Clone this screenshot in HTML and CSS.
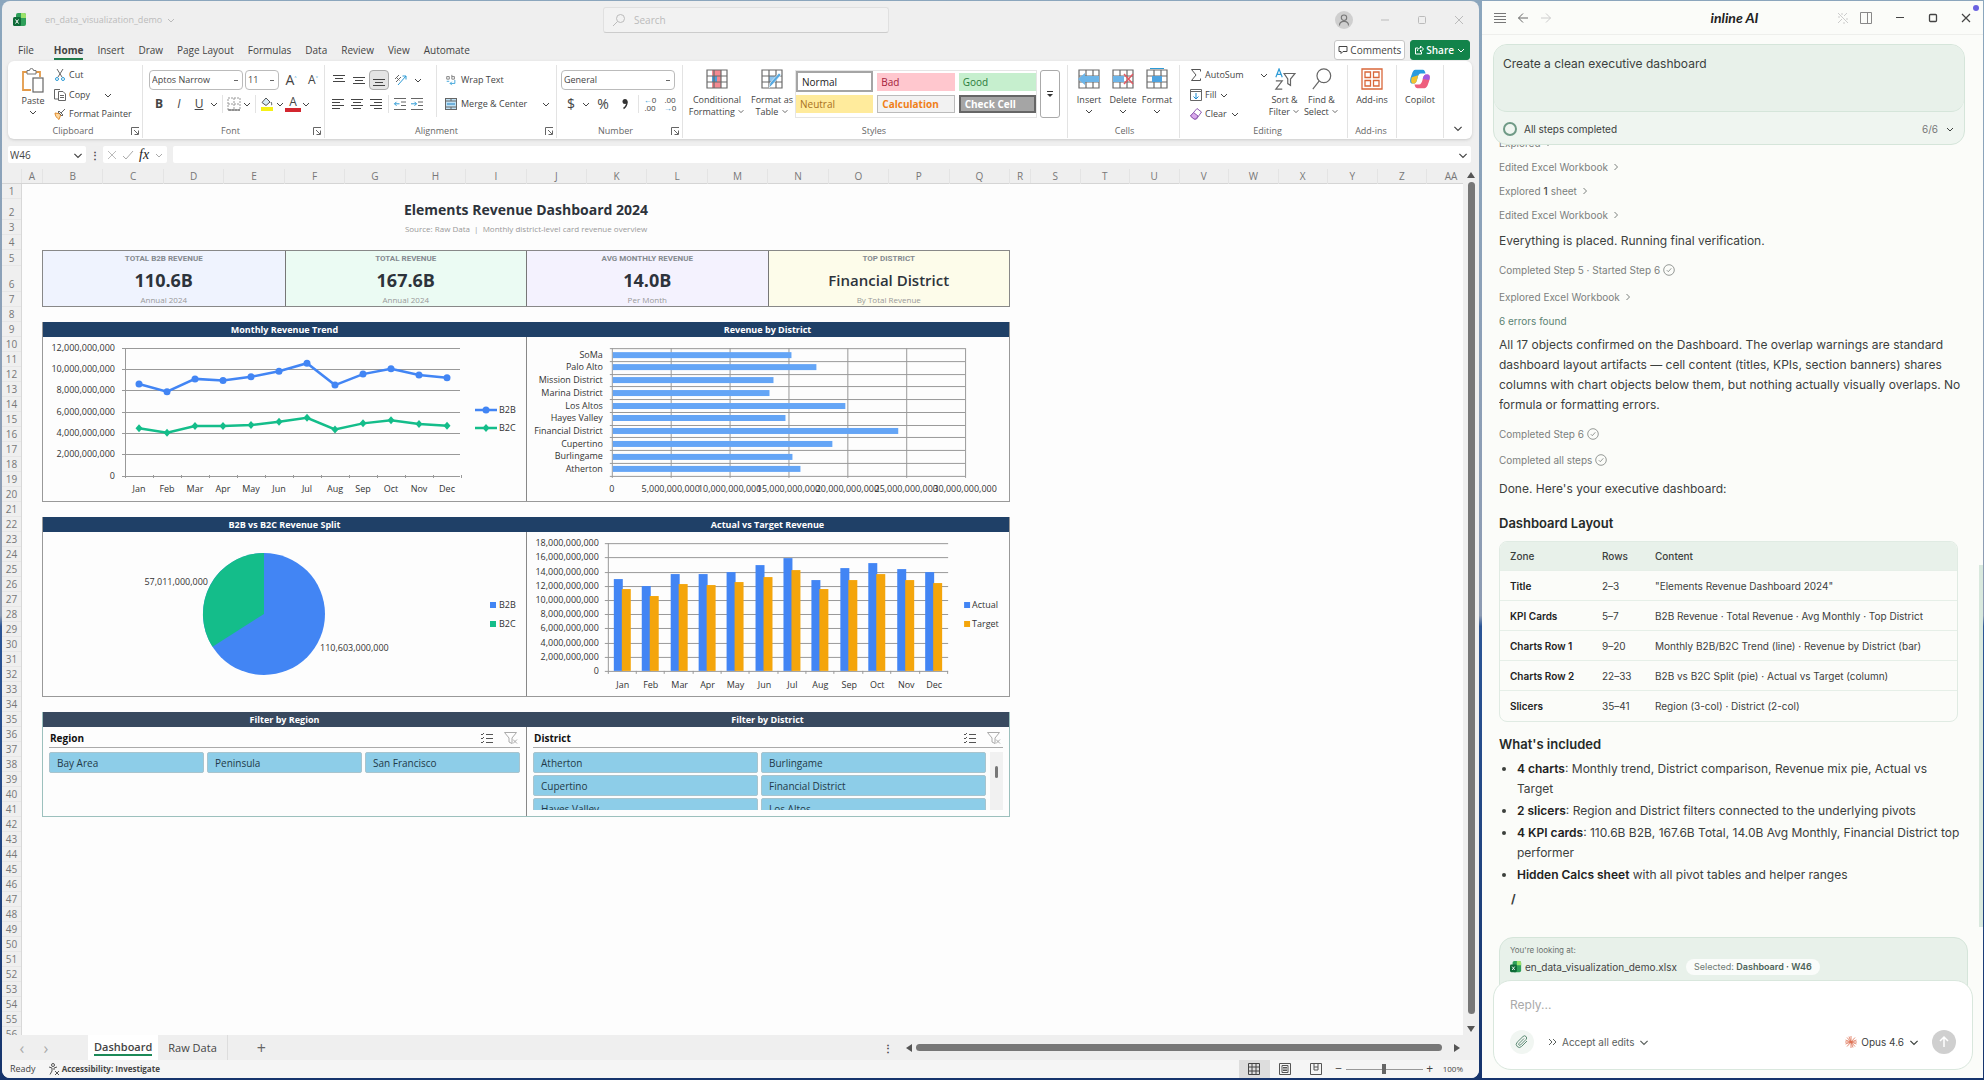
FILE: index.html
```html
<!DOCTYPE html>
<html lang="en">
<head>
<meta charset="utf-8">
<title>en_data_visualization_demo</title>
<link rel="stylesheet" href="styles.css">
</head>
<body>
<svg class="defs" aria-hidden="true">
  <symbol id="chev" viewBox="0 0 10 10"><path d="M2 4l3 3 3-3" fill="none" stroke="currentColor"/></symbol>
  <symbol id="chev-r" viewBox="0 0 10 10"><path d="M3.500 2l3 3-3 3" fill="none" stroke="currentColor"/></symbol>
  <symbol id="launch" viewBox="0 0 10 10"><path d="M1.500 9V1.500H9M4 4l4 4M8.500 4.500v4h-4" fill="none" stroke="currentColor"/></symbol>
  <symbol id="excel" viewBox="0 0 14 14"><rect x="3" y="0" width="10" height="13" rx="2" fill="#2fa05a"/><path d="M8 0h3a2 2 0 0 1 2 2v3H8z" fill="#9be26b"/><rect x="0" y="4" width="8" height="9" rx="1.500" fill="#0f6b38"/><path d="M2.500 6.500l3 4M5.500 6.500l-3 4" stroke="#fff"/></symbol>
  <symbol id="done" viewBox="0 0 12 12"><circle cx="6" cy="6" r="5.300" fill="none" stroke="currentColor" stroke-width=".8"/><path d="M3.800 6.200l1.500 1.500 3-3.400" fill="none" stroke="currentColor" stroke-width=".8"/></symbol>
  <symbol id="lines-c" viewBox="0 0 14 14"><path d="M1 2.500h12M3 5.500h8M1 8.500h12M3 11.500h8" stroke="currentColor"/></symbol>
  <symbol id="lines-l" viewBox="0 0 14 14"><path d="M1 2.500h12M1 5.500h8M1 8.500h12M1 11.500h8" stroke="currentColor"/></symbol>
  <symbol id="lines-r" viewBox="0 0 14 14"><path d="M1 2.500h12M5 5.500h8M1 8.500h12M5 11.500h8" stroke="currentColor"/></symbol>
  <symbol id="v-top" viewBox="0 0 14 14"><path d="M1 2.500h12M3 5.500h8M1 8.500h12" stroke="currentColor"/></symbol>
  <symbol id="v-mid" viewBox="0 0 14 14"><path d="M1 4.500h12M3 7.500h8M1 10.500h12" stroke="currentColor"/></symbol>
  <symbol id="v-bot" viewBox="0 0 14 14"><path d="M1 6.500h12M3 9.500h8M1 12.500h12" stroke="currentColor"/></symbol>
  <symbol id="indent-out" viewBox="0 0 14 14"><path d="M1 1.500h12M8 5h5M8 8.500h5M1 12.500h12" stroke="#666"/><path d="M6.500 6.800H1.500M3.500 4.800l-2 2 2 2" fill="none" stroke="#2d9bd6"/></symbol>
  <symbol id="indent-in" viewBox="0 0 14 14"><path d="M1 1.500h12M8 5h5M8 8.500h5M1 12.500h12" stroke="#666"/><path d="M1 6.800h5.500M4.500 4.800l2 2-2 2" fill="none" stroke="#2d9bd6"/></symbol>
  <symbol id="table" viewBox="0 0 22 22"><path d="M1 2h20v18H1zM1 8h20M1 14h20M8 2v18M15 2v18" fill="none" stroke="#6b6b6b" stroke-width="1.200"/></symbol>
  <symbol id="multi" viewBox="0 0 14 12"><path d="M1 2l1 1 2-2M1 6l1 1 2-2M1 10l1 1 2-2M6 2.500h7M6 6.500h7M6 10.500h7" fill="none" stroke="#555"/></symbol>
  <symbol id="funnel" viewBox="0 0 14 12"><path d="M.5.500h12L8 6v5.500L5 10V6zM9 7.500l4 4M13 7.500l-4 4" fill="none" stroke="#aaa"/></symbol>
</svg>

<main class="excel">
  <header class="titlebar">
    <svg class="i14"><use href="#excel"/></svg>
    <button class="docname">en_data_visualization_demo <svg class="i10"><use href="#chev"/></svg></button>
    <label class="search"><svg viewBox="0 0 14 14" class="i14"><circle cx="8.500" cy="5.500" r="4" fill="none" stroke="currentColor"/><path d="M5.500 8.500L1 13" stroke="currentColor"/></svg><input type="text" placeholder="Search" aria-label="Search"></label>
    <div class="wincontrols">
      <svg viewBox="0 0 20 20" class="avatar"><circle cx="10" cy="10" r="10" fill="#cfcfcf"/><circle cx="10" cy="7.500" r="3" fill="none" stroke="#777" stroke-width="1.200"/><path d="M5 16c0-6 10-6 10 0" fill="none" stroke="#777" stroke-width="1.200"/></svg>
      <button aria-label="Minimize"><svg viewBox="0 0 10 10" class="i10"><path d="M1 5h8" stroke="currentColor"/></svg></button>
      <button aria-label="Maximize"><svg viewBox="0 0 10 10" class="i10"><rect x="1.500" y="1.500" width="7" height="7" rx="1" fill="none" stroke="currentColor"/></svg></button>
      <button aria-label="Close"><svg viewBox="0 0 10 10" class="i10"><path d="M1 1l8 8M9 1L1 9" stroke="currentColor"/></svg></button>
    </div>
  </header>

  <nav class="tabs">
    <button>File</button><button class="on">Home</button><button>Insert</button><button>Draw</button><button>Page Layout</button><button>Formulas</button><button>Data</button><button>Review</button><button>View</button><button>Automate</button>
    <span class="grow"></span>
    <button class="comments"><svg viewBox="0 0 10 10" class="i10"><path d="M1 1.500h8v5H5L3 8.500v-2H1z" fill="none" stroke="currentColor"/></svg>Comments</button>
    <button class="share"><svg viewBox="0 0 10 10" class="i10"><path d="M4 3H1.500v6h6V7M3.500 6c0-2 1-3 3-3V1L9.500 4l-3 3V5" fill="none" stroke="currentColor"/></svg>Share<svg class="i10"><use href="#chev"/></svg></button>
  </nav>

  <section class="ribbon">
    <div class="group clip">
      <div class="body">
        <button class="big"><svg viewBox="0 0 24 26" class="ipaste"><path d="M7 4H2v18h8M15 4h4v5" fill="none" stroke="#e39a49" stroke-width="1.800"/><path d="M6 2.500h2.500a2 2 0 0 1 4 0H15V6H6z" fill="#fff" stroke="#777"/><rect x="12" y="10" width="10" height="14" fill="#fff" stroke="#666" stroke-width="1.200"/></svg><span>Paste</span><svg class="i10"><use href="#chev"/></svg></button>
        <div class="stack">
          <button><svg viewBox="0 0 12 12" class="i12"><path d="M3 0l5 8M9 0L4 8" stroke="#666"/><circle cx="3" cy="10" r="1.500" fill="none" stroke="#2d9bd6"/><circle cx="9" cy="10" r="1.500" fill="none" stroke="#2d9bd6"/></svg>Cut</button>
          <button><svg viewBox="0 0 12 12" class="i12"><path d="M4 10H.5V.500H6M4.500 2.500H9l2.500 2.500v6.500h-7zM6 6.500h4M6 8.500h4" fill="none" stroke="#666"/></svg>Copy<svg class="i10 far"><use href="#chev"/></svg></button>
          <button><svg viewBox="0 0 12 12" class="i12"><path d="M1 5l6 1-2 5.500C3 10 1 8 1 5z" fill="#ffd9a0" stroke="#e08b2d"/><path d="M5 3l4 4M7 5l4-4M4 4l1-1 4 4-1 1z" fill="#fff" stroke="#666"/></svg>Format Painter</button>
        </div>
      </div>
      <div class="glabel"><span>Clipboard</span><svg class="i10"><use href="#launch"/></svg></div>
    </div>

    <div class="group font">
      <div class="body col">
        <div class="row pick"><select aria-label="Font" class="w94"><option>Aptos Narrow</option></select><select aria-label="Font size" class="w34"><option>11</option></select><button class="ib grow-a">A<sup>˄</sup></button><button class="ib shrink-a">A<sup>˅</sup></button></div>
        <div class="row"><button class="ib"><b>B</b></button><button class="ib"><i>I</i></button><button class="ib"><u>U</u></button><button class="cv" aria-label="Underline styles"><svg class="i10"><use href="#chev"/></svg></button><span class="vd"></span><button class="ib n" aria-label="Borders"><svg viewBox="0 0 14 14" class="i14"><path d="M1 1h12v12H1zM7 1v12M1 7h12" fill="none" stroke="#999" stroke-dasharray="2 1"/><path d="M1 13h12" stroke="#555"/></svg></button><button class="cv" aria-label="Border styles"><svg class="i10"><use href="#chev"/></svg></button><span class="vd"></span><button class="ib n" aria-label="Fill color"><svg viewBox="0 0 14 14" class="i14"><path d="M6 1L2 5.500l4 3 4-3.500zM11 5c1 2 1 3 0 3" fill="#d8ecf8" stroke="#555"/><rect x="1" y="10" width="12" height="4" fill="#f5f116"/></svg></button><button class="cv" aria-label="Fill colors"><svg class="i10"><use href="#chev"/></svg></button><button class="ib n fontcolor">A</button><button class="cv" aria-label="Font colors"><svg class="i10"><use href="#chev"/></svg></button></div>
      </div>
      <div class="glabel"><span>Font</span><svg class="i10"><use href="#launch"/></svg></div>
    </div>

    <div class="group align">
      <div class="body">
        <div class="col">
          <div class="row"><button class="ib" aria-label="Top"><svg class="i14"><use href="#v-top"/></svg></button><button class="ib" aria-label="Middle"><svg class="i14"><use href="#v-mid"/></svg></button><button class="ib pressed" aria-label="Bottom"><svg class="i14"><use href="#v-bot"/></svg></button><button class="ib w" aria-label="Orientation"><svg viewBox="0 0 14 14" class="i14"><path d="M4 12L12 3M8.500 3H12v3.500" fill="none" stroke="#2d9bd6"/><path d="M1 6l4-4M2 9l5-5M2.500 4.500l3 3" stroke="#666"/></svg></button><button class="cv" aria-label="More"><svg class="i10"><use href="#chev"/></svg></button></div>
          <div class="row"><button class="ib" aria-label="Left"><svg class="i14"><use href="#lines-l"/></svg></button><button class="ib" aria-label="Center"><svg class="i14"><use href="#lines-c"/></svg></button><button class="ib" aria-label="Right"><svg class="i14"><use href="#lines-r"/></svg></button><span class="vd"></span><button class="ib n" aria-label="Outdent"><svg class="i14"><use href="#indent-out"/></svg></button><button class="ib" aria-label="Indent"><svg class="i14"><use href="#indent-in"/></svg></button></div>
        </div>
        <span class="tall"></span>
        <div class="col">
          <button class="row txt"><svg viewBox="0 0 12 14" class="i12"><path d="M1 3h3v3H1zM7 1v5h3V3H7" fill="none" stroke="#777"/><path d="M1 8.500h3M10.500 7v4H5M7 9l-2 2 2 2" fill="none" stroke="#2d9bd6"/></svg>Wrap Text</button>
          <button class="row txt"><svg viewBox="0 0 12 12" class="i12"><rect x=".5" y=".5" width="11" height="11" fill="#bfe1f5" stroke="#666"/><path d="M.500 3h11M.500 9h11M6 .500V3M6 9v2.500" stroke="#666"/><path d="M2 6h8" stroke="#1d7fc0"/></svg>Merge &amp; Center<svg class="i10 far"><use href="#chev"/></svg></button>
        </div>
      </div>
      <div class="glabel"><span>Alignment</span><svg class="i10"><use href="#launch"/></svg></div>
    </div>

    <div class="group number">
      <div class="body col">
        <div class="row pick"><select aria-label="Number format" class="w114"><option>General</option></select></div>
        <div class="row"><button class="ib lg">$</button><button class="cv" aria-label="Currencies"><svg class="i10"><use href="#chev"/></svg></button><button class="ib w lg">%</button><button class="ib comma" aria-label="Comma style"><svg viewBox="0 0 10 12" class="i12"><circle cx="5" cy="3.500" r="2.500" fill="#333"/><path d="M7 3.500C7 7 6 9 3.500 10.500" fill="none" stroke="#333" stroke-width="1.500"/></svg></button><span class="vd"></span><button class="ib n dec"><span><em>←</em>0</span><span>.00</span></button><button class="ib w dec"><span>.00</span><span><em>→</em>0</span></button></div>
      </div>
      <div class="glabel"><span>Number</span><svg class="i10"><use href="#launch"/></svg></div>
    </div>

    <div class="group styles">
      <div class="body">
        <button class="big w68"><svg viewBox="0 0 22 22" class="i22"><path d="M6 2h9v18H6z" fill="#f48a92"/><path d="M6 8h5v6H6z" fill="#4e9edb"/><use href="#table"/></svg><span>Conditional<br>Formatting <svg class="i10"><use href="#chev"/></svg></span></button>
        <button class="big w44"><svg viewBox="0 0 22 22" class="i22"><path d="M8 8h7v6H8z" fill="#8cc4ee"/><use href="#table"/><path d="M20 7l-8 9-4 4 1-5 9-10z" fill="#58a9e0" stroke="#fff" stroke-width=".6"/></svg><span>Format as<br>Table <svg class="i10"><use href="#chev"/></svg></span></button>
        <div class="gallery">
          <button class="normal">Normal</button><button class="bad">Bad</button><button class="good">Good</button>
          <button class="neutral">Neutral</button><button class="calc">Calculation</button><button class="check">Check Cell</button>
        </div>
        <button class="more" aria-label="More styles"><svg viewBox="0 0 8 8" class="i8"><path d="M1 1.500h6" stroke="#333"/><path d="M1 4h6L4 7z" fill="#333"/></svg></button>
      </div>
      <div class="glabel"><span>Styles</span></div>
    </div>

    <div class="group cells">
      <div class="body">
        <button class="big"><svg viewBox="0 0 22 22" class="i22"><use href="#table"/><path d="M7 8h14v6H7zM7 5v12L0 11z" fill="#6db5e8"/></svg><span>Insert</span><svg class="i10"><use href="#chev"/></svg></button>
        <button class="big"><svg viewBox="0 0 22 22" class="i22"><use href="#table"/><path d="M1 8h11v6H1z" fill="#6db5e8"/><path d="M12 6l9 10M21 6l-9 10" stroke="#e25a63" stroke-width="1.500"/></svg><span>Delete</span><svg class="i10"><use href="#chev"/></svg></button>
        <button class="big"><svg viewBox="0 0 22 22" class="i22"><use href="#table"/><path d="M6 8h10v6H6z" fill="#4ea3e0"/><path d="M4 .500h14" stroke="#2d9bd6"/></svg><span>Format</span><svg class="i10"><use href="#chev"/></svg></button>
      </div>
      <div class="glabel"><span>Cells</span></div>
    </div>

    <div class="group editing">
      <div class="body">
        <div class="stack">
          <button><svg viewBox="0 0 12 12" class="i12"><path d="M10.500 2.500v-2h-9L6 6l-4.500 5.500h9v-2" fill="none" stroke="#555"/></svg>AutoSum<svg class="i10 far"><use href="#chev"/></svg></button>
          <button><svg viewBox="0 0 12 12" class="i12"><path d="M.500.500h11v11H.500zM.500 2.500h11" fill="none" stroke="#666"/><path d="M6 4v6M3.500 7.500L6 10l2.500-2.500" fill="none" stroke="#1d8ad0"/></svg>Fill<svg class="i10"><use href="#chev"/></svg></button>
          <button><svg viewBox="0 0 12 12" class="i12"><path d="M7 .500l4.500 3.500-5 7H4L.500 8z" fill="#fff" stroke="#8e5bb0"/><path d="M3.500 4.500L8 8l-2 3H4L.500 8z" fill="#d9a8ec" stroke="#8e5bb0"/></svg>Clear<svg class="i10"><use href="#chev"/></svg></button>
        </div>
        <button class="big w36"><svg viewBox="0 0 24 24" class="i22"><path d="M2 10l3.500-9L9 10M3.500 7h4" fill="none" stroke="#2d9bd6" stroke-width="1.300"/><path d="M2 14h7l-7 9h7M11 6h12l-5 6v7l-3-2v-5z" fill="none" stroke="#666" stroke-width="1.300"/></svg><span>Sort &amp;<br>Filter <svg class="i10"><use href="#chev"/></svg></span></button>
        <button class="big w36"><svg viewBox="0 0 24 24" class="i22"><circle cx="14" cy="8.500" r="7.500" fill="none" stroke="#666" stroke-width="1.300"/><path d="M9 14l-7 9" stroke="#666" stroke-width="1.300"/></svg><span>Find &amp;<br>Select <svg class="i10"><use href="#chev"/></svg></span></button>
      </div>
      <div class="glabel"><span>Editing</span></div>
    </div>

    <div class="group addins">
      <div class="body"><button class="big"><svg viewBox="0 0 22 22" class="i22"><path d="M1 1h20v20H1zM4 4h5.500v5.500H4zM12.500 4H18v5.500h-5.500zM4 12.500h5.500V18H4zM12.500 12.500H18V18h-5.500z" fill="none" stroke="#d9673a" stroke-width="1.300"/></svg><span>Add-ins</span></button></div>
      <div class="glabel"><span>Add-ins</span></div>
    </div>
    <div class="group copilot">
      <div class="body"><button class="big"><svg viewBox="0 0 24 24" class="i22"><path d="M7 2h8c2 0 2.500 2 3 4h-5c-2 0-3 2-4 6s-2 5-4 5H4C0 17 1 12 3 7c1-3 2-5 4-5z" fill="#2a9be0"/><path d="M3 10c-1 4-1 7 2 7s3-2 4-5l1-4z" fill="#f2c230"/><path d="M17 22H9c-2 0-2.500-2-3-4h5c2 0 3-2 4-6s2-5 4-5h1c4 0 3 5 1 10-1 3-2 5-4 5z" fill="#ee5f7d"/><path d="M15 12c1-4 2-5 4-5h1c3 0 3 3 2 6z" fill="#a35ae0"/></svg><span>Copilot</span></button></div>
    </div>
    <button class="collapse" aria-label="Collapse ribbon"><svg class="i12" viewBox="0 0 10 10"><use href="#chev"/></svg></button>
  </section>

  <section class="formula">
    <label class="namebox"><input type="text" value="W46" aria-label="Name box"><svg class="i12" viewBox="0 0 10 10"><use href="#chev"/></svg></label>
    <span class="kebab">⋮</span>
    <div class="fxbox"><svg viewBox="0 0 10 10" class="i10 dim"><path d="M1 1l8 8M9 1L1 9" stroke="currentColor" stroke-width=".8"/></svg><svg viewBox="0 0 12 10" class="i12 dim"><path d="M1 6l3 3 7-8" fill="none" stroke="currentColor"/></svg><i class="fx">fx</i><svg class="i10 dim"><use href="#chev"/></svg></div>
    <label class="fbar"><input type="text" aria-label="Formula bar"><svg class="i12" viewBox="0 0 10 10"><use href="#chev"/></svg></label>
  </section>

  <section class="sheetarea">
    <div class="sheet">
      <div class="colhead" id="colhead"></div>
      <div class="rows">
        <div class="rowhead" id="rowhead"></div>
        <article class="dash">
          <h1>Elements Revenue Dashboard 2024</h1>
          <p class="source">Source: Raw Data &nbsp;|&nbsp; Monthly district-level card revenue overview</p>
          <div class="kpis">
            <div class="kpi blue"><small>TOTAL B2B REVENUE</small><strong>110.6B</strong><span>Annual 2024</span></div>
            <div class="kpi green"><small>TOTAL REVENUE</small><strong>167.6B</strong><span>Annual 2024</span></div>
            <div class="kpi violet"><small>AVG MONTHLY REVENUE</small><strong>14.0B</strong><span>Per Month</span></div>
            <div class="kpi yellow"><small>TOP DISTRICT</small><strong class="name">Financial District</strong><span>By Total Revenue</span></div>
          </div>
          <div class="pair">
            <section class="panel"><h2>Monthly Revenue Trend</h2><svg class="chart" id="trend" viewBox="0 0 483 164"></svg></section>
            <section class="panel"><h2>Revenue by District</h2><svg class="chart" id="district" viewBox="0 0 483 164"></svg></section>
          </div>
          <div class="pair">
            <section class="panel"><h2>B2B vs B2C Revenue Split</h2><svg class="chart" id="split" viewBox="0 0 483 164"></svg></section>
            <section class="panel"><h2>Actual vs Target Revenue</h2><svg class="chart" id="target" viewBox="0 0 483 164"></svg></section>
          </div>
          <div class="pair filters">
            <section class="panel"><h2>Filter by Region</h2>
              <div class="slicer"><div class="shead"><b>Region</b><svg class="i14"><use href="#multi"/></svg><svg class="i14"><use href="#funnel"/></svg></div>
              <div class="opts three"><button>Bay Area</button><button>Peninsula</button><button>San Francisco</button></div></div>
            </section>
            <section class="panel"><h2>Filter by District</h2>
              <div class="slicer"><div class="shead"><b>District</b><svg class="i14"><use href="#multi"/></svg><svg class="i14"><use href="#funnel"/></svg></div>
              <div class="scroller"><div class="opts two"><button>Atherton</button><button>Burlingame</button><button>Cupertino</button><button>Financial District</button><button>Hayes Valley</button><button>Los Altos</button></div><div class="mini"><span></span></div></div></div>
            </section>
          </div>
        </article>
      </div>
    </div>
    <div class="vscroll"><svg viewBox="0 0 8 8" class="i8"><path d="M0 7l4-6 4 6z" fill="#555"/></svg><span class="thumb"></span><svg viewBox="0 0 8 8" class="i8"><path d="M0 1l4 6 4-6z" fill="#555"/></svg></div>
  </section>

  <footer class="sheettabs">
    <button class="arrow" aria-label="Previous sheet">‹</button><button class="arrow" aria-label="Next sheet">›</button>
    <button class="stab on"><span>Dashboard</span></button><button class="stab">Raw Data</button><button class="plus">+</button>
    <span class="kebab">⋮</span>
    <div class="hscroll"><svg viewBox="0 0 8 8" class="i8"><path d="M7 0L1 4l6 4z" fill="#555"/></svg><span class="thumb"></span><svg viewBox="0 0 8 8" class="i8"><path d="M1 0l6 4-6 4z" fill="#555"/></svg></div>
  </footer>
  <footer class="status">
    <span>Ready</span>
    <svg viewBox="0 0 12 12" class="i12"><circle cx="5" cy="2" r="1.500" fill="none" stroke="#555"/><path d="M1 4l3 1v3l-2 3.500M9 4L6 5v2M7 8l4 4M11 8l-4 4" fill="none" stroke="#555"/></svg>
    <b>Accessibility: Investigate</b>
    <span class="grow"></span>
    <button class="view on" aria-label="Normal view"><svg viewBox="0 0 12 12" class="i12"><path d="M.500.500h11v11H.500zM.500 4h11M.500 8h11M4 .500v11M8 .500v11" fill="none" stroke="#444"/></svg></button>
    <button class="view" aria-label="Page layout"><svg viewBox="0 0 12 12" class="i12"><path d="M.500.500h11v11H.500zM3 2.500h6v7H3zM4 4.500h4M4 6h4M4 7.500h4" fill="none" stroke="#555"/></svg></button>
    <button class="view" aria-label="Page break"><svg viewBox="0 0 12 12" class="i12"><path d="M.500.500h11v11H.500zM4 .500V7h4M8 .500V7M4 4h4" fill="none" stroke="#555"/></svg></button>
    <span class="zb">−</span><input type="range" aria-label="Zoom" value="50"><span class="zb">+</span><span class="pct">100%</span>
  </footer>
</main>

<aside class="ai">
  <header class="aihead">
    <button aria-label="Menu"><svg viewBox="0 0 12 12" class="i12"><path d="M0 1.500h12M0 4.500h12M0 7.500h12M0 10.500h12" stroke="#777"/></svg></button>
    <button aria-label="Back"><svg viewBox="0 0 12 12" class="i12"><path d="M11 6H1.500M6 1.500L1.500 6 6 10.500" fill="none" stroke="#666"/></svg></button>
    <button aria-label="Forward"><svg viewBox="0 0 12 12" class="i12"><path d="M1 6h9.500M6 1.500L10.500 6 6 10.500" fill="none" stroke="#ccc"/></svg></button>
    <span class="logo">inline AI</span>
    <button aria-label="Magic"><svg viewBox="0 0 12 12" class="i12"><path d="M1 1l10 10M10 1L7 4M5 7l-4 4M5 1v2M1 5h2M9 7h2M7 10v2" stroke="#ccc"/></svg></button>
    <button aria-label="Panel"><svg viewBox="0 0 12 12" class="i12"><path d="M.500.500h11v11H.500zM7.500.500v11" fill="none" stroke="#888"/></svg></button>
    <button class="wc" aria-label="Minimize"><svg viewBox="0 0 10 10" class="i10"><path d="M1 4.500h8" stroke="#444"/></svg></button>
    <button class="wc" aria-label="Maximize"><svg viewBox="0 0 10 10" class="i10"><rect x="1.500" y="1.500" width="7" height="7" rx="1" fill="none" stroke="#444" stroke-width="1.300"/></svg></button>
    <button class="wc" aria-label="Close"><svg viewBox="0 0 10 10" class="i10"><path d="M1 1l8 8M9 1L1 9" stroke="#444" stroke-width="1.200"/></svg></button>
    <span class="dot"></span>
  </header>
  <div class="task">
    <p class="prompt">Create a clean executive dashboard</p>
    <button class="steps"><span class="ring"></span>All steps completed<span class="count">6/6</span><svg class="i10"><use href="#chev"/></svg></button>
  </div>
  <div class="log">
    <button class="act">Explored <svg class="i10"><use href="#chev-r"/></svg></button>
    <button class="act">Edited Excel Workbook <svg class="i10"><use href="#chev-r"/></svg></button>
    <button class="act">Explored <b>1</b> sheet <svg class="i10"><use href="#chev-r"/></svg></button>
    <button class="act">Edited Excel Workbook <svg class="i10"><use href="#chev-r"/></svg></button>
    <p>Everything is placed. Running final verification.</p>
    <div class="mark">Completed Step 5 · Started Step 6 <svg class="i12"><use href="#done"/></svg></div>
    <button class="act">Explored Excel Workbook <svg class="i10"><use href="#chev-r"/></svg></button>
    <div class="act err">6 errors found</div>
    <p>All 17 objects confirmed on the Dashboard. The overlap warnings are standard dashboard layout artifacts — cell content (titles, KPIs, section banners) shares columns with chart objects below them, but nothing actually visually overlaps. No formula or formatting errors.</p>
    <div class="mark">Completed Step 6 <svg class="i12"><use href="#done"/></svg></div>
    <div class="mark">Completed all steps <svg class="i12"><use href="#done"/></svg></div>
    <p>Done. Here's your executive dashboard:</p>
    <h3>Dashboard Layout</h3>
    <div class="tablebox">
    <table>
      <thead><tr><th>Zone</th><th>Rows</th><th>Content</th></tr></thead>
      <tbody>
        <tr><th>Title</th><td>2–3</td><td>"Elements Revenue Dashboard 2024"</td></tr>
        <tr><th>KPI Cards</th><td>5–7</td><td>B2B Revenue · Total Revenue · Avg Monthly · Top District</td></tr>
        <tr><th>Charts Row 1</th><td>9–20</td><td>Monthly B2B/B2C Trend (line) · Revenue by District (bar)</td></tr>
        <tr><th>Charts Row 2</th><td>22–33</td><td>B2B vs B2C Split (pie) · Actual vs Target (column)</td></tr>
        <tr><th>Slicers</th><td>35–41</td><td>Region (3-col) · District (2-col)</td></tr>
      </tbody>
    </table>
    </div>
    <h3 class="second">What's included</h3>
    <ul>
      <li><b>4 charts</b>: Monthly trend, District comparison, Revenue mix pie, Actual vs Target</li>
      <li><b>2 slicers</b>: Region and District filters connected to the underlying pivots</li>
      <li><b>4 KPI cards</b>: 110.6B B2B, 167.6B Total, 14.0B Avg Monthly, Financial District top performer</li>
      <li><b>Hidden Calcs sheet</b> with all pivot tables and helper ranges</li>
    </ul>
    <div class="spinner">/</div>
  </div>
  <span class="aiscroll"></span>
  <div class="composer">
    <div class="context"><span>You're looking at:</span>
      <div class="file"><svg class="i12" viewBox="0 0 14 14"><use href="#excel"/></svg>en_data_visualization_demo.xlsx<span class="chip">Selected: <b>Dashboard · W46</b></span></div>
    </div>
    <div class="reply">
      <textarea rows="1" placeholder="Reply..." aria-label="Reply"></textarea>
      <div class="tools">
        <button class="attach" aria-label="Attach"><svg viewBox="0 0 14 14" class="i14"><path d="M12 6l-5.500 5.500a3 3 0 0 1-4.300-4.300L8 1.500a2 2 0 0 1 3 3L5.500 10a1 1 0 0 1-1.500-1.500L9 3.500" fill="none" stroke="#5c8a74"/></svg></button>
        <button class="mode"><svg viewBox="0 0 10 10" class="i10"><path d="M1 2l3 3-3 3M5 2l3 3-3 3" fill="none" stroke="currentColor"/></svg>Accept all edits<svg class="i12" viewBox="0 0 10 10"><use href="#chev"/></svg></button>
        <span class="grow"></span>
        <button class="model"><svg viewBox="0 0 12 12" class="i12"><path d="M6 0v12M0 6h12M2 1.500l8 9M10 1.500l-8 9M4 .500l4 11M.500 4l11 4M.500 8l11-4" stroke="#dd7052" stroke-width=".8"/></svg>Opus 4.6<svg class="i12" viewBox="0 0 10 10"><use href="#chev"/></svg></button>
        <button class="send" aria-label="Send"><svg viewBox="0 0 14 14" class="i14"><path d="M7 12V2M3 6l4-4 4 4" fill="none" stroke="#fff" stroke-width="1.500"/></svg></button>
      </div>
    </div>
  </div>
</aside>
<script src="charts.js"></script>
</body>
</html>
```

FILE: styles.css
```css
* { box-sizing: border-box; }
body {
  margin: 0; height: 100vh; padding: 1px 1px 2px 2px; display: flex; gap: 3px; overflow: hidden;
  background: linear-gradient(#8ba6bd, #8d9bb2 57%, #2b5596 58%, #16346c);
  font: 10px/14px "Open Sans", "Noto Sans", sans-serif; color: #444;
}
button, input, select, textarea { font: inherit; color: inherit; border: 0; background: none; padding: 0; margin: 0; }
button { display: inline-flex; align-items: center; white-space: nowrap; }
svg { flex: none; }
h1, h2, h3, p, ul { margin: 0; padding: 0; }
.defs { position: absolute; width: 0; height: 0; }
.i8 { width: 8px; height: 8px; }
.i10 { width: 10px; height: 10px; }
.i12 { width: 12px; height: 12px; }
.i14 { width: 14px; height: 14px; }
.i22 { width: 22px; height: 22px; }
.grow { flex: 1; }

/* Spreadsheet window */
.excel { flex: 1; min-width: 0; display: flex; flex-direction: column; background: #efefef; border-radius: 8px; overflow: hidden; }
.titlebar { height: 37px; padding: 0 15px 0 11px; display: flex; align-items: center; color: #bbb; flex: none; }
.docname { margin-left: 18px; width: 558px; font-size: 9px; gap: 4px; }
.search { width: 286px; height: 26px; border: 1px solid #e0e0e0; border-bottom-color: #ccc; border-radius: 3px; display: flex; align-items: center; gap: 8px; padding: 0 8px; background: #f2f2f2; }
.search input { flex: 1; min-width: 0; }
.search input::placeholder { color: #bbb; opacity: 1; }
.wincontrols { margin-left: auto; display: flex; align-items: center; gap: 27px; color: #bbb; }
.avatar { width: 18px; height: 18px; }

.tabs { height: 23px; padding: 0 9px 0 16px; display: flex; align-items: center; gap: 14px; flex: none; }
.tabs button { height: 20px; }
.tabs .on { margin-left: 6px; font-weight: 700; border-bottom: 2px solid #1c7a48; padding-top: 2px; }
.tabs .comments, .tabs .share { border: 1px solid #c6c6c6; border-radius: 3px; background: #fff; padding: 0 3px; gap: 2px; }
.tabs .share { margin-left: -9px; background: #12834a; border-color: #12834a; color: #fff; font-weight: 600; }

.ribbon { height: 78px; margin: 0 7px 0 6px; display: flex; background: #fff; border-radius: 6px; box-shadow: 0 1px 3px #ccc; flex: none; font-size: 9px; }
.group { display: flex; flex-direction: column; border-right: 1px solid #e3e3e3; margin: 4px 0 1px; flex: none; }
.body { display: flex; flex: 1; min-height: 0; }
.col { display: flex; flex-direction: column; padding-top: 3px; }
.row { display: flex; align-items: center; height: 24px; }
.glabel { height: 14px; display: flex; align-items: center; color: #666; padding-right: 2px; }
.glabel span { flex: 1; text-align: center; }
.big { flex-direction: column; justify-content: flex-start; width: 34px; padding-top: 3px; line-height: 12px; }
.big span { margin-top: 4px; text-align: center; }
.big span svg { width: 8px; height: 8px; }
.ipaste { width: 24px; height: 26px; }
.ipaste + span { margin-top: 1px; }
.stack { display: flex; flex-direction: column; align-items: flex-start; }
.stack button { height: 20px; gap: 3px; }
.far { margin-left: 10px; }
.clip { width: 135px; padding-left: 8px; }
.clip .stack { margin-left: 4px; }
.font { width: 182px; padding-left: 6px; }
.pick { gap: 2px; }
select { appearance: none; height: 20px; border: 1px solid #bbb; border-radius: 4px; padding: 0 2px; background: #fff linear-gradient(#666, #666) no-repeat right 4px center / 4px 1px; }
.w94 { width: 94px; } .w34 { width: 34px; } .w114 { width: 114px; }
.ib { width: 20px; height: 20px; justify-content: center; font-size: 12px; }
.ib.n { width: 16px; }
.ib.w { width: 24px; }
.ib.lg { font-size: 14px; }
.ib sup { font-size: 8px; color: #2d9bd6; }
.grow-a { font-size: 14px; }
.cv { width: 10px; }
.vd { width: 1px; height: 18px; margin: 0 3px; background: #e3e3e3; }
.fontcolor { height: 16px; border-bottom: 4px solid #d3262f; line-height: 12px; }
.align { width: 232px; padding-left: 4px; }
.pressed { border: 1px solid #aaa; border-radius: 4px; background: #e4e4e4; }
.tall { width: 1px; background: #e3e3e3; margin: 0 8px 0 10px; height: 52px; }
.align .col:first-child { width: 97px; }
.txt { gap: 4px; }
.number { width: 126px; padding-left: 4px; }
.ib.dec { flex-direction: column; font-size: 8px; line-height: 8px; }
.dec em { font-style: normal; color: #2d9bd6; }
.styles { flex: 1; min-width: 0; }
.w68 { width: 68px; } .w44 { width: 42px; } .w36 { width: 37px; }
.gallery { margin: 5px 3px 0 2px; flex: 1; min-width: 0; display: grid; grid-template-columns: repeat(3, 1fr); grid-template-rows: 21px 21px; gap: 1px 4px; border: 1px solid #e5e5e5; height: 48px; align-items: center; }
.gallery button { height: 18px; padding: 0 4px; font-size: 10px; }
.gallery .normal { height: 21px; border: 2px solid #a5a5a5; color: #222; }
.bad { background: #ffc7ce; color: #a3203a; }
.good { background: #c6efce; color: #2a7a3a; }
.neutral { background: #ffeb9c; color: #a8701c; }
.calc { background: #f2f2f2; border: 1px solid #bbb; color: #f08018; font-weight: 700; }
.check { background: #a5a5a5; border: 2px solid #666; color: #fff; font-weight: 700; }
.more { width: 20px; height: 48px; margin: 5px 7px 0 0; border: 1px solid #aaa; border-radius: 3px; justify-content: center; }
.cells { width: 112px; padding-left: 4px; }
.editing { width: 168px; padding-left: 10px; }
.editing .stack { width: 76px; }
.editing .far { margin-left: 12px; }
.addins { width: 49px; }
.addins .big, .copilot .big { width: 48px; }
.copilot { width: 47px; }
.collapse { width: 28px; align-items: flex-end; justify-content: center; padding-bottom: 5px; }

.formula { height: 30px; padding: 7px 8px 6px 6px; display: flex; align-items: center; flex: none; }
.namebox, .fxbox, .fbar { background: #fff; height: 17px; border-radius: 2px; display: flex; align-items: center; }
.namebox { width: 78px; padding: 0 2px; }
.namebox input { flex: 1; min-width: 0; }
.kebab { width: 17px; text-align: center; font-weight: 700; }
.fxbox { width: 64px; gap: 5px; padding: 0 4px; }
.dim { color: #aaa; }
.fx { font: italic 14px/16px "Liberation Serif", serif; color: #222; }
.fbar { flex: 1; margin-left: 6px; padding-right: 2px; }
.fbar input { flex: 1; }

.sheetarea { flex: 1; min-height: 0; display: flex; }
.sheet { flex: 1; min-width: 0; display: flex; flex-direction: column; overflow: hidden; }
.colhead { display: flex; height: 15px; border-bottom: 1px solid #d5d5d5; color: #777; line-height: 15px; flex: none; }
.colhead span { text-align: center; border-right: 1px solid #e4e4e4; flex: none; }
.colhead .corner { width: 20px; }
.colhead .narrow { width: 21px; }
.colhead .last { width: 49px; }
.colhead .wide { width: 967px; display: grid; grid-template-columns: repeat(16, 1fr); flex: none; }
.colhead .mid { width: 396px; display: grid; grid-template-columns: repeat(8, 1fr); flex: none; }
.rows { flex: 1; min-height: 0; display: flex; overflow: hidden; background: #fdfdfd; }
.rowhead { width: 20px; background: #efefef; border-right: 1px solid #d8d8d8; color: #777; flex: none; }
.rowhead div { height: 15px; display: flex; align-items: flex-end; justify-content: center; line-height: 14px; border-bottom: 1px solid #e6e6e6; }
.rowhead .r2 { height: 21px; } .rowhead .r5 { height: 16px; } .rowhead .r6 { height: 26px; }
.vscroll { width: 16px; padding: 2px 4px; display: flex; flex-direction: column; align-items: center; gap: 3px; }
.vscroll .thumb { width: 7px; flex: 1; background: #777; border-radius: 4px; margin-bottom: 8px; }

/* Dashboard on the sheet */
.dash { width: 968px; margin-left: 20px; color: #2d333b; flex: none; }
.dash h1 { margin-top: 15px; height: 21px; font-size: 14px; line-height: 22px; text-align: center; font-weight: 700; }
.source { height: 15px; font-size: 8px; line-height: 17px; color: #999; text-align: center; }
.kpis { margin-top: 15px; display: grid; grid-template-columns: repeat(4, 1fr); height: 57px; border: 1px solid #888; }
.kpi { display: flex; flex-direction: column; align-items: center; justify-content: space-between; padding-top: 1px; }
.kpi + .kpi { border-left: 1px solid #777; }
.kpi small { font: 700 8px/14px Roboto, sans-serif; color: #858a90; }
.kpi strong { font-size: 18px; line-height: 26px; font-weight: 700; }
.kpi .name { font-size: 15px; font-weight: 600; }
.kpi span { font-size: 8px; line-height: 13px; color: #999; }
.blue { background: #eff3fe; } .green { background: #ebfbf3; } .violet { background: #f4f2fe; } .yellow { background: #fdfcea; }
.pair { margin-top: 15px; display: grid; grid-template-columns: 1fr 1fr; border: 1px solid #999; border-top: 0; }
.panel + .panel { border-left: 1px solid #888; }
.panel h2 { height: 15px; background: #1f4067; color: #fff; font-size: 9px; line-height: 15px; text-align: center; font-weight: 700; }
.filters { border-color: #9cc0bd; }
.filters h2 { background: #38495f; }
.panel + .panel h2 { margin-left: -1px; }
.chart { display: block; width: 100%; height: 164px; font-size: 9px; }
.chart text { fill: #333; }
.grid { stroke: #999; stroke-width: 1; fill: none; }
.slicer { height: 89px; padding: 2px 6px 6px; color: #222; }
.shead { height: 19px; border-bottom: 1px solid #aaa; display: flex; align-items: center; gap: 10px; padding: 0 2px 0 1px; color: #111; }
.shead b { flex: 1; }
.opts { display: grid; gap: 2px 3px; flex: 1; margin-top: 4px; }
.three { grid-template-columns: repeat(3, 1fr); }
.two { grid-template-columns: 1fr 1fr; }
.opts button { height: 21px; background: #8dcde8; border: 1px solid #a8c4ce; border-radius: 2px; padding: 0 7px; color: #1f3a48; }
.scroller { display: flex; height: 62px; overflow: hidden; gap: 4px; }
.mini { width: 13px; background: #f1f1f1; margin-top: 4px; display: flex; justify-content: center; }
.mini span { width: 3px; height: 12px; margin-top: 14px; background: #777; border-radius: 2px; }

.sheettabs { height: 25px; padding-left: 8px; display: flex; align-items: center; background: #efefef; flex: none; }
.arrow { width: 24px; justify-content: center; color: #aaa; font-size: 16px; }
.stab { height: 25px; padding: 0 10px; font-size: 11px; border-right: 1px solid #ddd; }
.stab.on { margin-left: 30px; padding: 0 6px; background: #fff; font-weight: 600; border: 0; }
.stab.on span { border-bottom: 2px solid #1c8a58; }
.plus { margin: 0 auto 0 29px; font-size: 16px; color: #666; }
.hscroll { width: 556px; display: flex; align-items: center; gap: 3px; margin: 0 18px 0 9px; }
.hscroll .thumb { flex: 1; height: 7px; margin-right: 8px; background: #777; border-radius: 4px; }
.status { height: 18px; padding: 0 16px 0 8px; display: flex; align-items: center; background: #f5f5f5; font-size: 9px; flex: none; }
.status > svg { margin: 0 2px 0 12px; }
.status b { font-weight: 700; font-size: 8px; }
.view { width: 31px; height: 18px; justify-content: center; }
.view.on { background: #ddd; }
.zb { width: 14px; text-align: center; font-size: 12px; }
input[type=range] { width: 77px; height: 12px; appearance: none; background: linear-gradient(#999, #999) no-repeat center / 100% 1px; }
input[type=range]::-webkit-slider-thumb { appearance: none; width: 4px; height: 10px; background: #666; }
.pct { margin-left: 6px; font-size: 8px; }

/* Assistant panel */
.ai { width: 501px; flex: none; position: relative; display: flex; flex-direction: column; background: #fbfcf9; font: 12px/20px Inter, sans-serif; color: #3b403d; overflow: hidden; }
.aihead { height: 34px; border-bottom: 1px solid #eeefec; padding: 0 12px 0 12px; display: flex; align-items: center; gap: 11px; flex: none; }
.logo { flex: 1; text-align: center; font: italic 700 14px/20px Lato, sans-serif; color: #222; padding-left: 80px; }
.wc { margin-left: 12px; }
.dot { position: absolute; right: 4px; top: 4px; width: 6px; height: 6px; border-radius: 3px; background: #6a62e0; }
.task { position: relative; z-index: 1; margin: 9px 18px 0 11px; height: 101px; border: 1px solid #d5e5da; border-radius: 14px; background: #eff5f0; flex: none; }
.prompt { height: 67px; padding: 9px; background: #e8f1ea; border-bottom: 1px solid #d5e5da; border-radius: 13px; }
.steps { width: 100%; height: 33px; padding: 0 9px; gap: 7px; font-size: 10px; }
.ring { width: 14px; height: 14px; border: 2px solid #6f9a86; border-radius: 7px; }
.count { margin-left: auto; color: #777; }
.log { flex: 1; min-height: 0; overflow: hidden; margin: -14px 17px 0 17px; display: flex; flex-direction: column; }
.act, .mark { display: flex; align-items: center; gap: 3px; height: 24px; font-size: 10px; color: #7b807d; flex: none; }
.act b { font-weight: 500; color: #444; }
.mark { height: 26px; }
.mark + .act { margin-top: 2px; }
.act.err { color: #5c8373; margin-top: 2px; height: 20px; }
.log p { padding: 4px 0 6px; flex: none; }
.log .mark + p { padding-top: 6px; }
.log h3 { font-size: 13px; line-height: 20px; font-weight: 600; color: #262a28; margin: 8px 0; flex: none; }
.tablebox { margin-right: 8px; border: 1px solid #e0ebe3; border-radius: 8px; overflow: hidden; flex: none; }
.log .second { margin: 12px 0 5px; }
table { border-spacing: 0; width: 100%; font-size: 10px; line-height: 16px; }
th, td { text-align: left; font-weight: 400; padding: 0 0 0 10px; height: 30px; border-bottom: 1px solid #e6efe8; }
thead th { background: #e8f1ea; height: 29px; font-weight: 500; }
tbody th { font-weight: 600; color: #222; width: 92px; }
td:nth-child(2) { width: 53px; }
tbody tr:last-child > * { border: 0; }
ul { padding-left: 18px; display: flex; flex-direction: column; gap: 2px; }
li b { font-weight: 600; color: #222; }
.spinner { padding: 4px 12px; font-weight: 700; }
.aiscroll { position: absolute; right: 0; top: 564px; width: 4px; height: 362px; background: #d9e9de; }
.composer { padding: 0 10px 8px 11px; flex: none; font-size: 10px; }
.context { margin: 0 5px 0 6px; height: 58px; padding: 4px 10px; background: #e8f1ea; border: 1px solid #d5e5da; border-radius: 14px 14px 0 0; font-size: 8px; line-height: 16px; color: #6b726e; }
.context > span { display: block; }
.file { display: flex; align-items: center; gap: 3px; font-size: 10px; color: #444; margin-top: 1px; }
.chip { margin-left: 6px; padding: 0 8px; border-radius: 8px; background: #fafcfa; font-size: 9px; color: #6e7a74; }
.chip b { font-weight: 600; color: #4c6358; }
.reply { position: relative; margin-top: -15px; height: 90px; background: #fff; border: 1px solid #d9e7dd; border-radius: 18px; padding: 14px 16px; display: flex; flex-direction: column; justify-content: space-between; }
textarea { resize: none; width: 100%; height: 20px; font-size: 12px; display: block; }
textarea::placeholder { color: #aaa; opacity: 1; }
.tools { display: flex; align-items: center; height: 26px; }
.attach, .send { width: 24px; height: 24px; border-radius: 12px; background: #f1f6f2; justify-content: center; }
.mode { margin-left: 14px; gap: 4px; color: #5a605d; }
.model { gap: 4px; margin-right: 12px; }
.send { background: #cfcfcf; }
```

FILE: charts.js
```js
const months = ['Jan', 'Feb', 'Mar', 'Apr', 'May', 'Jun', 'Jul', 'Aug', 'Sep', 'Oct', 'Nov', 'Dec'];
const billions = n => n ? n + ',000,000,000' : '0';
const text = (x, y, s, anchor = 'middle') => `<text x="${x}" y="${y + 3}" text-anchor="${anchor}">${s}</text>`;
const line = (x1, y1, x2, y2) => `<path class="grid" d="M${x1} ${y1}L${x2} ${y2}"/>`;
const rect = (x, y, w, h, fill) => `<rect x="${x}" y="${y}" width="${w}" height="${h}" fill="${fill}"/>`;
const BLUE = '#4285f4', GREEN = '#14bd8a', ORANGE = '#f4a50b', SKY = '#64a5f6';

// Sheet headings
const span = s => `<span>${s}</span>`;
document.getElementById('colhead').innerHTML =
  '<span class="corner"></span><span class="narrow">A</span><div class="wide">' + [...'BCDEFGHIJKLMNOPQ'].map(span).join('') +
  '</div><span class="narrow">R</span><div class="mid">' + [...'STUVWXYZ'].map(span).join('') + '</div><span class="last">AA</span>';
document.getElementById('rowhead').innerHTML =
  Array.from({ length: 56 }, (_, i) => `<div class="r${i + 1}">${i + 1}</div>`).join('');

// Monthly trend, values in billions
{
  const y = v => 138.500 - v * 10.640;
  let s = '';
  for (let v = 0; v <= 12; v += 2) s += line(79, Math.round(y(v)) + .5, 417, Math.round(y(v)) + .5) + text(72, y(v), billions(v), 'end');
  s += line(82.5, 11, 82.5, 141);
  months.forEach((m, i) => { s += line(110.5 + 28 * i, 138, 110.5 + 28 * i, 141) + text(96 + 28 * i, 152, m); });
  const series = (vals, color, mark) => `<polyline fill="none" stroke="${color}" stroke-width="2.500" points="${vals.map((v, i) => (96 + 28 * i) + ',' + y(v)).join(' ')}"/>` + vals.map((v, i) => mark(96 + 28 * i, y(v))).join('');
  const dot = (x, y) => `<circle cx="${x}" cy="${y}" r="3.500" fill="${BLUE}"/>`;
  const gem = (x, y) => `<path d="M${x} ${y - 4}l3.500 4-3.500 4-3.500-4z" fill="${GREEN}"/>`;
  s += series([8.600, 7.880, 9.080, 8.940, 9.280, 9.800, 10.550, 8.500, 9.530, 10.040, 9.440, 9.190], BLUE, dot);
  s += series([4.450, 4.020, 4.650, 4.650, 4.740, 5.050, 5.430, 4.330, 4.900, 5.200, 4.840, 4.680], GREEN, gem);
  s += `<path d="M432 73h22" stroke="${BLUE}" stroke-width="2.500"/>` + dot(443, 73) + text(456, 73, 'B2B', 'start');
  s += `<path d="M432 91h22" stroke="${GREEN}" stroke-width="2.500"/>` + gem(443, 91) + text(456, 91, 'B2C', 'start');
  document.getElementById('trend').innerHTML = s;
}

// Revenue by district, bar lengths on a 30 billion axis
{
  const data = [['SoMa', 15.2], ['Palo Alto', 17.3], ['Mission District', 13.7], ['Marina District', 13.3], ['Los Altos', 19.8], ['Hayes Valley', 14.7], ['Financial District', 24.3], ['Cupertino', 18.7], ['Burlingame', 15.3], ['Atherton', 16]];
  let s = '';
  for (let i = 0; i <= 10; i++) s += line(83, Math.round(11 + 12.750 * i) + .5, 439, Math.round(11 + 12.750 * i) + .5);
  for (let i = 0; i <= 6; i++) s += line(85.5 + 59 * i, 11, 85.5 + 59 * i, 141) + text(85 + 59 * i, 152, billions(i * 5));
  data.forEach(([name, v], i) => { const c = 17.500 + 12.750 * i; s += rect(86, Math.round(c - 3), Math.round(v * 11.780), 6, SKY) + text(76, c, name, 'end'); });
  document.getElementById('district').innerHTML = s;
}

// Revenue split
document.getElementById('split').innerHTML =
  `<circle cx="221" cy="82" r="61" fill="${BLUE}"/><path d="M221 82L169.500 114.800A61 61 0 0 1 221 21z" fill="${GREEN}"/>` +
  text(165, 50, '57,011,000,000', 'end') + text(277, 116, '110,603,000,000', 'start') +
  rect(447, 70, 6, 6, BLUE) + text(456, 73, 'B2B', 'start') + rect(447, 89, 6, 6, GREEN) + text(456, 92, 'B2C', 'start');

// Actual against target, values in billions
{
  const actual = [13, 12, 13.7, 13.6, 14, 14.9, 15.9, 12.8, 14.5, 15.2, 14.3, 13.9];
  const target = [11.6, 10.6, 12.3, 12.1, 12.5, 13.3, 14.2, 11.5, 12.8, 13.6, 12.8, 12.4];
  const y = v => Math.round(139 - v * 7.100);
  let s = '';
  for (let v = 0; v <= 18; v += 2) s += line(78, y(v) + .5, 422, y(v) + .5) + text(72, y(v), billions(v), 'end');
  s += line(81.5, 11, 81.5, 142);
  months.forEach((m, i) => {
    const x = Math.round(87 + 28.350 * i);
    s += rect(x, y(actual[i]), 9, 139 - y(actual[i]), BLUE) + rect(x + 8, y(target[i]), 9, 139 - y(target[i]), ORANGE) + line(x + 22.500, 139, x + 22.500, 142) + text(x + 9, 153, m);
  });
  s += rect(438, 70, 6, 6, BLUE) + text(446, 73, 'Actual', 'start') + rect(438, 89, 6, 6, ORANGE) + text(446, 92, 'Target', 'start');
  document.getElementById('target').innerHTML = s;
}
```
